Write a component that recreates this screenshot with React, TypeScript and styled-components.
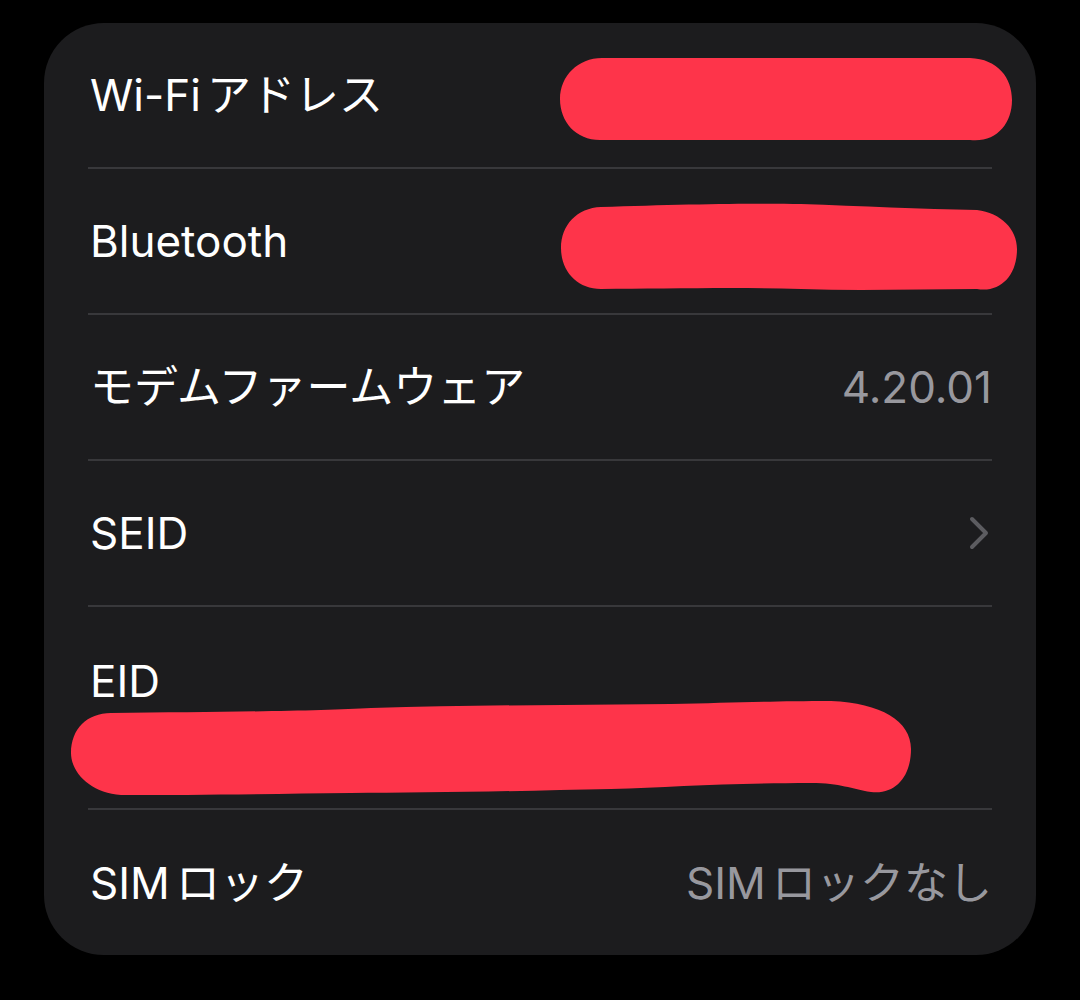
import styled, { createGlobalStyle } from 'styled-components';

const GlobalStyle = createGlobalStyle`
  html, body {
    margin: 0;
    padding: 0;
    background: #000;
  }
  body {
    font-family: Inter, "Noto Sans CJK JP", sans-serif;
  }
`;

const Page = styled.div`
  width: 1080px;
  height: 1000px;
  padding: 23px 0 0 44px;
  box-sizing: border-box;
  background: #000;
`;

const Card = styled.div`
  width: 992px;
  height: 932px;
  box-sizing: border-box;
  padding: 0 44px 0 44px;
  background: #1c1c1e;
  border-radius: 60px;
  overflow: hidden;
`;

const Row = styled.div<{ $last?: boolean }>`
  display: flex;
  align-items: center;
  justify-content: space-between;
  height: ${({ $last }) => ($last ? '145px' : '146px')};
  box-sizing: border-box;
  border-bottom: ${({ $last }) => ($last ? 'none' : '2px solid #38383b')};
`;

const StackRow = styled.div`
  display: flex;
  flex-direction: column;
  align-items: flex-start;
  height: 203px;
  box-sizing: border-box;
  padding-top: 48px;
  border-bottom: 2px solid #38383b;
`;

const Label = styled.span`
  font-size: 44px;
  line-height: 52px;
  color: #fff;
  margin-left: 2px;
`;

const Value = styled.span`
  font-size: 44px;
  line-height: 52px;
  color: #98989e;
`;

// 英字とカナの間の詰め
const Kana = styled.span`
  margin-left: 0.14em;
`;

// 赤いマーカーで塗りつぶした部分
const Marker = styled.svg<{ $right?: number; $top?: number; $left?: number }>`
  display: block;
  flex-shrink: 0;
  margin-right: ${({ $right }) => ($right ? `-${$right}px` : '0')};
  margin-left: ${({ $left }) => ($left ? `-${$left}px` : '0')};
  margin-top: ${({ $top }) => `${$top || 0}px`};
`;

const Chevron = styled.svg`
  display: block;
  margin-right: 3px;
`;

const RED = '#fe344a';

const App = () => {
  return (
    <>
      <GlobalStyle />
      <Page>
        <Card>
          <Row>
            <Label>
              Wi-Fi<Kana>アドレス</Kana>
            </Label>
            <Marker width="452" height="84" viewBox="0 0 452 84" $right={20} $top={10}>
              <path
                d="M42,0 H410 C438,1 452,20 452,42 C452,66 436,85 410,82 H40 C16,82 0,64 0,41 C0,18 18,0 42,0 Z"
                fill={RED}
              />
            </Marker>
          </Row>
          <Row>
            <Label>Bluetooth</Label>
            <Marker width="456" height="90" viewBox="0 0 456 90" $right={25} $top={14}>
              <path
                d="M40,4 C120,1 200,0 240,1 C300,3 360,6 416,7 C440,10 456,26 456,46 C456,72 440,90 416,86 C360,86 300,88 240,86 C170,84 100,86 40,86 C16,86 0,68 0,45 C0,22 16,5 40,4 Z"
                fill={RED}
              />
            </Marker>
          </Row>
          <Row>
            <Label>モデムファームウェア</Label>
            <Value>4.20.01</Value>
          </Row>
          <Row>
            <Label>SEID</Label>
            <Chevron width="20" height="34" viewBox="0 0 20 34">
              <polyline
                points="3,3 17,17 3,31"
                fill="none"
                stroke="#5c5c60"
                strokeWidth="4"
                strokeLinecap="round"
                strokeLinejoin="round"
              />
            </Chevron>
          </Row>
          <StackRow>
            <Label>EID</Label>
            <Marker width="840" height="95" viewBox="0 0 840 95" $left={17} $top={-6}>
              <path
                d="M40,12 C150,11 250,10 300,7 C400,4 500,4 600,3 C660,2 700,0 760,0 C810,2 840,20 840,48 C840,75 825,94 800,91 C780,88 770,82 740,82 C660,82 600,86 540,88 C450,90 350,92 280,92 C200,93 120,94 50,94 C20,92 0,72 0,52 C0,28 16,12 40,12 Z"
                fill={RED}
              />
            </Marker>
          </StackRow>
          <Row $last>
            <Label>
              SIM<Kana>ロック</Kana>
            </Label>
            <Value>
              SIM<Kana>ロックなし</Kana>
            </Value>
          </Row>
        </Card>
      </Page>
    </>
  );
};

export default App;
